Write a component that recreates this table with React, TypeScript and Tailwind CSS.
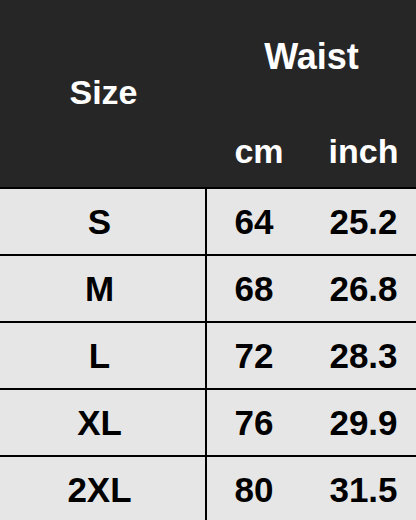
const rows = [
  ["S", "64", "25.2"],
  ["M", "68", "26.8"],
  ["L", "72", "28.3"],
  ["XL", "76", "29.9"],
  ["2XL", "80", "31.5"],
];

function App() {
  return (
    <div className="w-[416px] h-[520px] overflow-hidden bg-[#e6e6e6] font-['Liberation_Sans',Arial,sans-serif] font-bold text-[34px] leading-none">
      <div className="flex h-[187px] bg-[#262626] text-white">
        <div className="w-[207px] flex items-center justify-center pb-[3px]">Size</div>
        <div className="flex-1 flex flex-col">
          <div className="h-[116px] flex items-center justify-center pb-[2px] text-[36px]">Waist</div>
          <div className="flex-1 flex">
            <div className="w-[104px] flex items-center justify-center pb-[2px]">cm</div>
            <div className="flex-1 flex items-center justify-center pb-[2px]">inch</div>
          </div>
        </div>
      </div>
      {rows.map((r) => (
        <div key={r[0]} className="flex h-[67px] border-t-2 border-black text-black text-[35px]">
          <div className="w-[207px] border-r-2 border-black flex items-center justify-center pr-[6px]">{r[0]}</div>
          <div className="w-[104px] flex items-center justify-center pr-[10px]">{r[1]}</div>
          <div className="flex-1 flex items-center justify-center">{r[2]}</div>
        </div>
      ))}
    </div>
  );
}

export default App;
